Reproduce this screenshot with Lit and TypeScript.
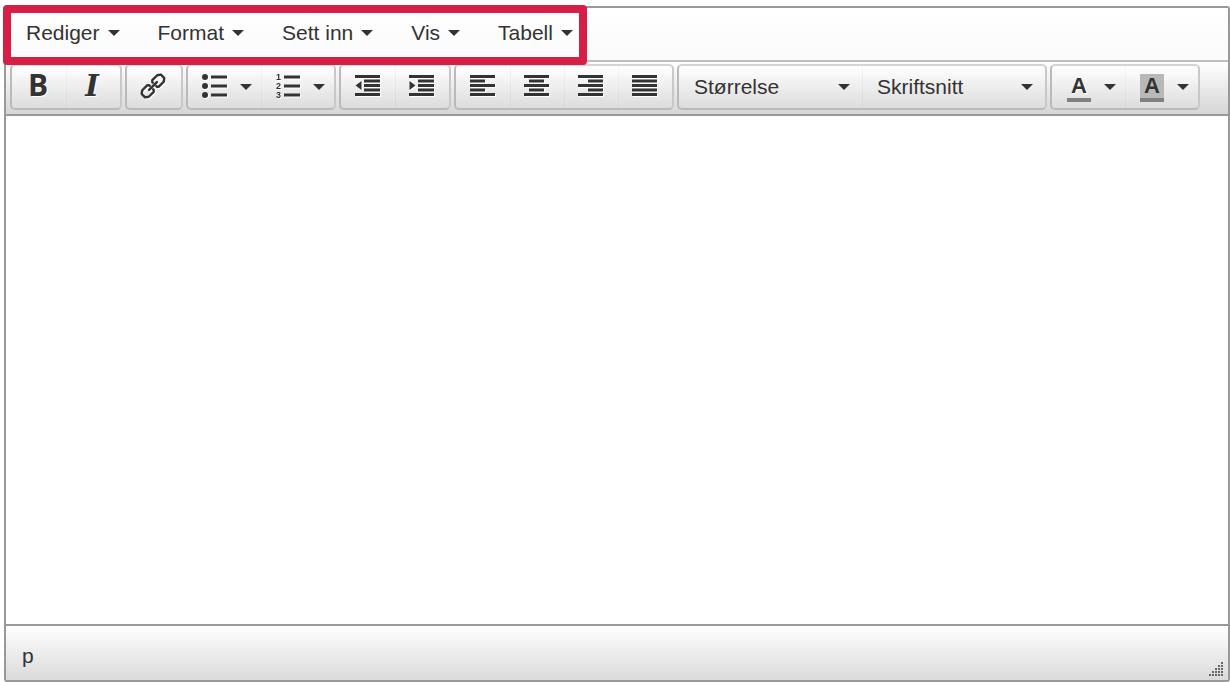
import { LitElement, html, svg, css } from "lit";
import { customElement } from "lit/decorators.js";

const ROW_Y = [0, 4.5, 9, 13.5, 18];
const bars = (rows: number[][]) =>
  rows.map(([x, w], i) => svg`<rect x=${x} y=${ROW_Y[i]} width=${w} height="3" />`);
const icon = (content: unknown, width = 25, height = 21) =>
  html`<svg class="icon" width=${width} height=${height} viewBox="0 0 ${width} ${height}" aria-hidden="true">${content}</svg>`;

const INNER = [[0, 25], [9, 16], [9, 16], [9, 16], [0, 25]];
const outdent = icon([bars(INNER), svg`<path d="M0.5 10.5 6.5 6v9z" />`]);
const indent = icon([bars(INNER), svg`<path d="M6.5 10.5 0.5 6v9z" />`]);
const alignLeft = icon(bars([[0, 25], [0, 15], [0, 25], [0, 15], [0, 25]]));
const alignCenter = icon(bars([[0, 25], [5, 15], [0, 25], [5, 15], [0, 25]]));
const alignRight = icon(bars([[0, 25], [10, 15], [0, 25], [10, 15], [0, 25]]));
const justify = icon(bars([[0, 25], [0, 25], [0, 25], [0, 25], [0, 25]]));
const link = icon(
  svg`<g transform="rotate(-45 13 13)" fill="none" stroke="#333" stroke-width="2.4" stroke-linecap="round" stroke-linejoin="round">
    <path d="M10.8 15.4V16.2L9.4 17.6H2.4L-0.6 15.4V10.6L2.4 8.4H9.4L10.8 9.8V10.6" />
    <path d="M15.2 10.6V9.8L16.6 8.4H23.6L26.6 10.6V15.4L23.6 17.6H16.6L15.2 16.2V15.4" />
    <path d="M7.5 13H18.5" />
  </g>`, 26, 26);
const bullets = icon([3, 12, 21].map((y) =>
  svg`<circle cx="3" cy=${y} r="3" /><rect x="9" y=${y - 1.5} width="16" height="3" />`), 25, 24);
const numbers = icon([3, 12, 21].map((y, i) =>
  svg`<text class="digit" x="1" y=${y + 3}>${i + 1}</text><rect x="9" y=${y - 1.5} width="16" height="3" />`), 25, 24);
const caret = html`<svg class="caret" width="12" height="6" viewBox="0 0 12 6" aria-hidden="true"><path d="M0 0h12L6 6z" /></svg>`;

@customElement("app-root")
export class AppRoot extends LitElement {
  static styles = css`
    :host {
      display: block;
      font-family: "Helvetica Neue", "Liberation Sans", Arial, sans-serif;
      font-size: 21px;
      color: #333;
    }
    * { box-sizing: border-box; }
    .page {
      display: flex;
      min-height: 100vh;
      padding: 6px 0 0 4px;
      background: #fff;
    }
    .editor {
      display: flex;
      flex-direction: column;
      flex: 1;
      border: 2px solid #999;
      border-radius: 3px;
    }
    button, select, textarea {
      margin: 0;
      padding: 0;
      border: 0;
      background: none;
      color: inherit;
      font: inherit;
    }
    svg { display: block; fill: #333; }
    .menubar {
      display: flex;
      border-bottom: 2px solid #bebebe;
      background: linear-gradient(#fff, #fafafa);
    }
    .menus {
      position: relative;
      display: flex;
      gap: 38px;
      height: 52px;
      padding: 0 14px 2px 20px;
    }
    .highlight {
      position: absolute;
      inset: -3px 0 -5px -3px;
      border: 8px solid #d61f45;
      border-radius: 4px;
      pointer-events: none;
    }
    .menu {
      display: flex;
      align-items: center;
      gap: 8px;
    }
    .toolbar {
      display: flex;
      flex-wrap: wrap;
      gap: 3px;
      padding: 2px 4px 4px;
      border-bottom: 2px solid #999;
      background: linear-gradient(#fff, #d6d6d6);
    }
    .group {
      display: flex;
      height: 46px;
      border: 2px solid #bababa;
      border-top-color: #d4d4d4;
      border-right-color: #c8c8c8;
      border-radius: 5px;
      background: linear-gradient(#fff, #dcdcdc);
    }
    .tool {
      display: flex;
      align-items: center;
      justify-content: center;
      width: 54px;
      padding-right: 2px;
    }
    .tool + .tool, .split + .split, .combo + .combo { box-shadow: inset 1px 0 #00000008; }
    .split {
      justify-content: flex-start;
      gap: 13px;
      width: 73px;
      padding: 0 0 0 14px;
    }
    .color { padding-left: 15px; }
    .icon { margin-bottom: 3px; overflow: visible; filter: drop-shadow(1px 1px 0 #fff); }
    .digit { font: bold 9px "Liberation Sans", sans-serif; }
    .bold { font: bold 30px/38px "Open Sans", sans-serif; height: 42px; text-shadow: 1px 1px #fff; }
    .italic { font: italic bold 29px/40px "DejaVu Serif", serif; height: 42px; text-shadow: 1px 1px #fff; }
    .letter {
      width: 24px;
      height: 28px;
      margin-top: 2px;
      border-bottom: 4px solid #808080;
      font: bold 22px/24px "Liberation Sans", sans-serif;
      text-align: center;
      text-shadow: 1px 1px #fff;
    }
    .filled { background: #b8b8b8; text-shadow: none; }
    .combo {
      display: grid;
      align-items: center;
      width: 183px;
    }
    .select, .combo .caret { grid-area: 1 / 1; }
    .select {
      appearance: none;
      width: 100%;
      height: 42px;
      padding: 0 40px 2px 15px;
    }
    .combo .caret { justify-self: end; margin-right: 12px; pointer-events: none; }
    .content {
      flex: 1;
      width: 100%;
      min-height: 120px;
      padding: 20px;
      resize: none;
      outline: 0;
      background: #fff;
    }
    .status {
      display: flex;
      justify-content: space-between;
      align-items: flex-end;
      height: 56px;
      padding: 0 5px 4px 16px;
      border-top: 2px solid #999;
      background: linear-gradient(#fff, #dadada);
    }
    .path { padding-bottom: 8px; line-height: 24px; }
  `;

  private tool(label: string, content: unknown) {
    return html`<button class="tool" type="button" aria-label=${label}>${content}</button>`;
  }

  private split(label: string, content: unknown, kind = "") {
    return html`<button class="tool split ${kind}" type="button" aria-label=${label} aria-haspopup="true">${content}${caret}</button>`;
  }

  private combo(label: string) {
    return html`<div class="combo">
      <select class="select" aria-label=${label}><option>${label}</option></select>${caret}
    </div>`;
  }

  render() {
    return html`
      <div class="page">
        <div class="editor">
          <div class="menubar">
            <nav class="menus">
              ${["Rediger", "Format", "Sett inn", "Vis", "Tabell"].map(
                (name) => html`<button class="menu" type="button" aria-haspopup="true">${name}${caret}</button>`)}
              <div class="highlight"></div>
            </nav>
          </div>
          <div class="toolbar" role="toolbar">
            <div class="group">
              ${this.tool("Fet", html`<span class="bold">B</span>`)}
              ${this.tool("Kursiv", html`<span class="italic">I</span>`)}
            </div>
            <div class="group">${this.tool("Lenke", link)}</div>
            <div class="group">${this.split("Punktliste", bullets)}${this.split("Nummerert liste", numbers)}</div>
            <div class="group">${this.tool("Reduser innrykk", outdent)}${this.tool("Øk innrykk", indent)}</div>
            <div class="group">
              ${this.tool("Venstrejuster", alignLeft)}${this.tool("Midtstill", alignCenter)}
              ${this.tool("Høyrejuster", alignRight)}${this.tool("Blokkjuster", justify)}
            </div>
            <div class="group">${this.combo("Størrelse")}${this.combo("Skriftsnitt")}</div>
            <div class="group">
              ${this.split("Tekstfarge", html`<span class="letter">A</span>`, "color")}
              ${this.split("Bakgrunnsfarge", html`<span class="letter filled">A</span>`, "color")}
            </div>
          </div>
          <textarea class="content" aria-label="Innhold"></textarea>
          <div class="status">
            <span class="path">p</span>
            <svg width="14" height="14" viewBox="0 0 14 14" aria-hidden="true">
              ${[0, 1, 2, 3, 4].map((r) => Array.from({ length: r + 1 }, (_, c) =>
                svg`<rect x=${12 - c * 3} y=${r * 3} width="2" height="2" fill="#666" />`))}
            </svg>
          </div>
        </div>
      </div>
    `;
  }
}
